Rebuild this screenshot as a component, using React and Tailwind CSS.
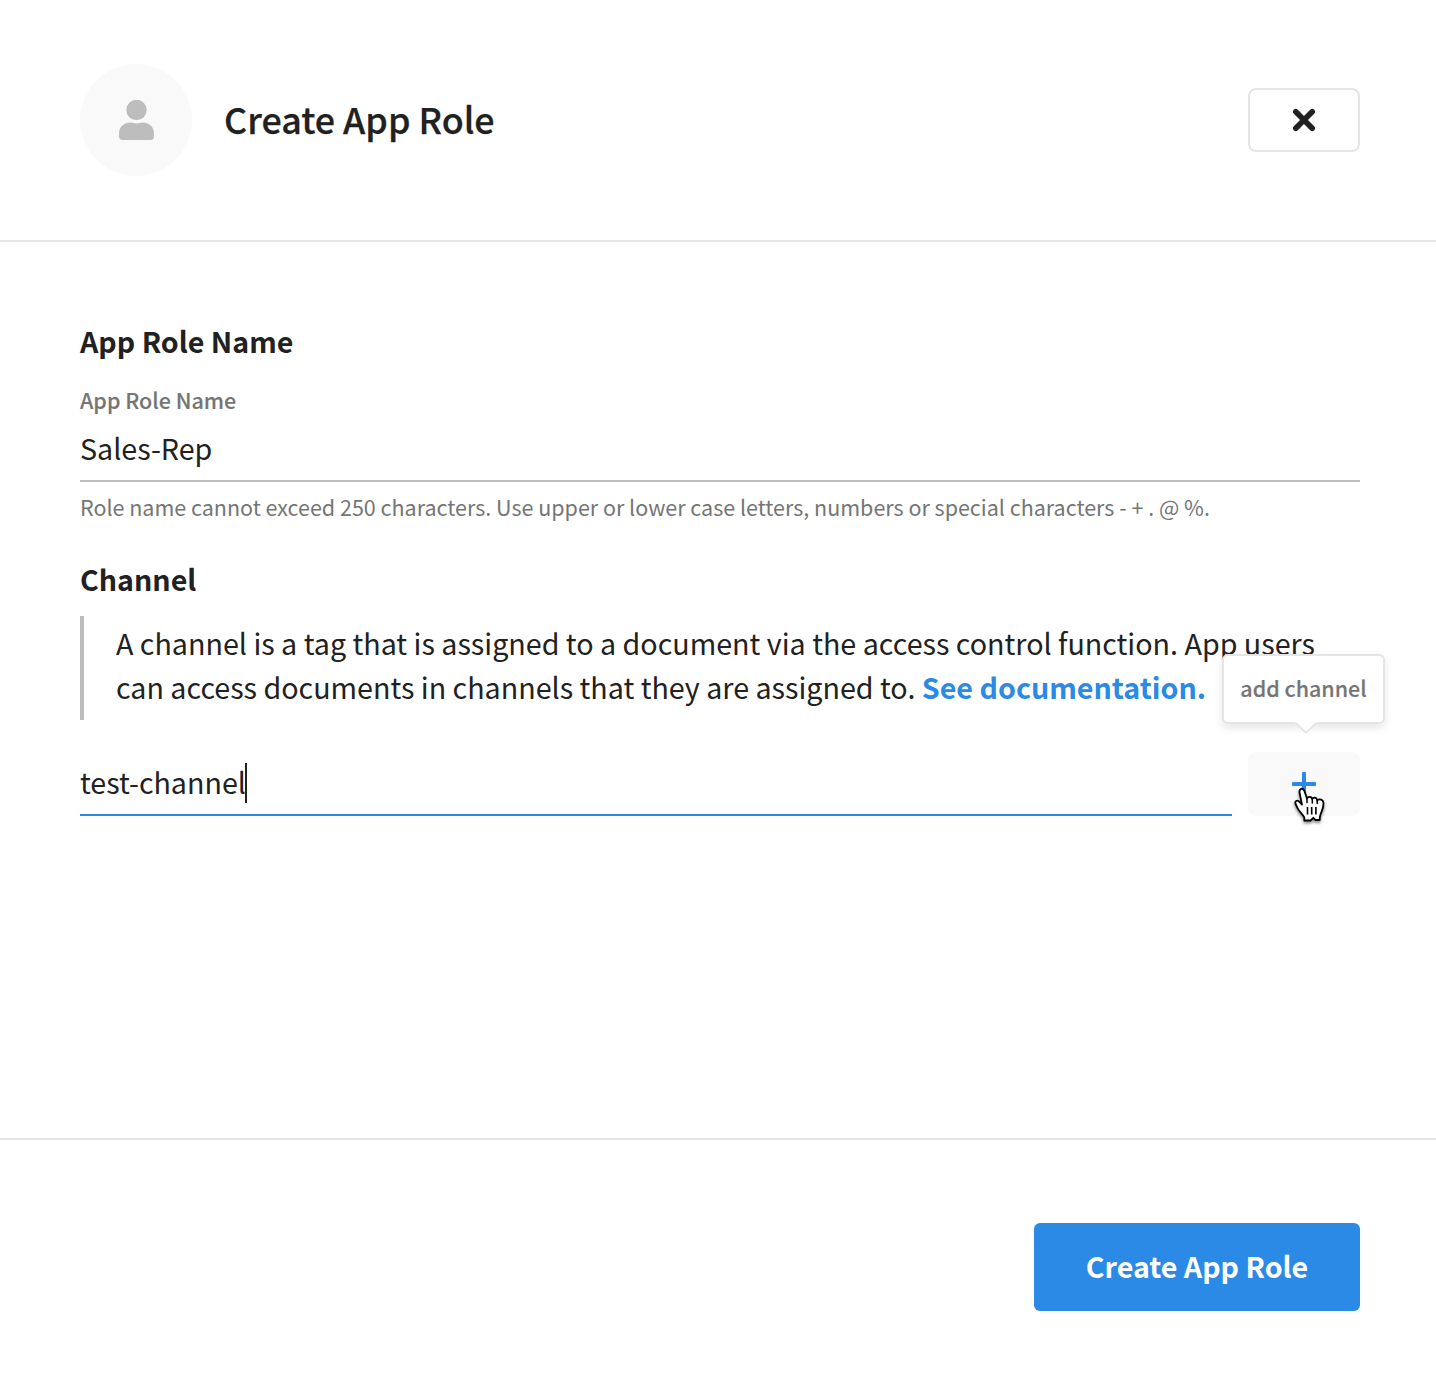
import React from 'react';

const Person = () => (
  <svg className="ml-px h-[40px] w-[35px]" viewBox="0 0 35 40" fill="#bdbdbd">
    <circle cx="17.500" cy="10" r="10.200" />
    <path d="M0 34C0 26.500 5 22.600 11.500 22.600C14 22.600 15 23.600 17.500 23.600C20 23.600 21 22.600 23.500 22.600C30 22.600 35 26.500 35 34V36.500C35 38.700 33.700 40 31.500 40H3.500C1.300 40 0 38.700 0 36.500Z" />
  </svg>
);

const Close = () => (
  <svg className="h-6 w-6" viewBox="0 0 24 24" stroke="#212121" fill="none">
    <path d="M3.200 3.200L20.800 20.800M20.800 3.200L3.200 20.800" strokeWidth="4.600" />
    <path d="M3.800 3.800L20.200 20.200M20.200 3.800L3.800 20.200" strokeLinecap="round" strokeWidth="5.600" />
  </svg>
);

const Plus = () => (
  <svg className="h-6 w-6" viewBox="0 0 24 24" stroke="#2a8ae6" strokeWidth="4" fill="none">
    <path d="M12 1.600V22.400M1.600 12H22.400" strokeLinecap="round" />
    <path d="M12 .6V23.400M.6 12H23.400" strokeWidth="3" />
  </svg>
);

const Hand = () => (
  <svg className="absolute top-[34px] left-[45px] h-[40px] w-[34px] drop-shadow-[0_2px_1.500px_rgba(0,0,0,0.45)]" viewBox="0 0 34 40" fill="none">
    <path
      d="M11.300 34.500V31.500C9.500 28.500 7.800 26.800 6 24.500C4.500 22.500 3.800 20.500 2.600 18C1.300 15 4.200 13.800 6.200 15.600L9 18.600L6.600 7C5.700 2.500 10 1.200 11.400 5L14 12.500C14.800 10.300 18.600 10 19.300 13C20.800 10.800 23.600 11.300 24.200 14.200C26.500 12.700 30 13.300 30.400 16.500C31 22 28.500 25.500 27.500 28.500C26.800 30.500 26.700 31.500 26.700 34L22.500 34L20.300 31.800L17.500 34.500Z"
      fill="#fff" stroke="#000" strokeWidth="1.800" strokeLinejoin="round"
    />
    <path d="M14 12.500V16.500M19.300 13V17M24.200 14.200V17.500" stroke="#000" strokeWidth="1.500" strokeLinecap="round" />
    <path d="M14.500 21V28.500M18.700 21V28.500M22.900 21V28.500" stroke="#000" strokeWidth="1.600" />
  </svg>
);

const Tooltip = () => (
  <div className="absolute bottom-[92px] left-[-26px] z-10 flex h-[70px] w-[163px] items-center justify-center rounded-md border-2 border-[#e5e5e5] bg-white pb-px text-[21.480px] font-medium whitespace-nowrap text-[#757575] shadow-[0_4px_8px_rgba(0,0,0,0.1)] [-webkit-text-stroke:0.15px]">
    add channel
    <svg className="absolute top-[66px] left-[71px] h-3 w-[22px]" viewBox="0 0 22 12">
      <path d="M0 0H22L11 11Z" fill="#fff" />
      <path d="M1 1L11 10.800L21 1" fill="none" stroke="#e5e5e5" strokeWidth="1.800" />
    </svg>
  </div>
);

export default function App() {
  return (
    <div className="flex h-[1384px] w-[1436px] flex-col bg-white font-['Noto_Sans_CJK_SC',sans-serif] text-[#212121]">
      <header className="flex h-[242px] items-center border-b-2 border-[#e5e5e5] pr-[76px] pl-20">
        <div className="flex size-28 items-center justify-center rounded-full bg-[#f9f9f9]">
          <Person />
        </div>
        <h1 className="ml-8 flex-1 pb-0.5 text-[35.850px] font-medium [-webkit-text-stroke:0.25px]">Create App Role</h1>
        <button className="flex h-16 w-28 items-center justify-center rounded-lg border-2 border-[#e5e5e5]">
          <Close />
        </button>
      </header>
      <main className="h-[896px] pt-[77px] pr-[76px] pl-20">
        <h2 className="h-[44px] text-[28.600px] leading-[44px] font-bold">App Role Name</h2>
        <div className="mt-5 text-[21.480px] leading-[34px] font-medium text-[#757575] [-webkit-text-stroke:0.15px]">App Role Name</div>
        <div className="h-[65px] border-b-2 border-[#bdbdbd] text-[28.640px] leading-[62px]">Sales-Rep</div>
        <p className="mt-[7px] text-[21.490px] leading-9 whitespace-nowrap text-[#757575]">Role name cannot exceed 250 characters. Use upper or lower case letters, numbers or special characters - + . @ %.</p>
        <h2 className="mt-8 h-[44px] text-[28.640px] leading-[44px] font-bold">Channel</h2>
        <p className="mt-[15px] border-l-4 border-[#bdbdbd] pt-[5px] pb-[11px] pl-8 text-[28.660px] leading-[44px] whitespace-nowrap">
          A channel is a tag that is assigned to a document via the access control function. App users<br />
          can access documents in channels that they are assigned to. <a className="font-bold text-[#2a8ae6]">See documentation.</a>
        </p>
        <div className="mt-8 flex gap-4">
          <div className="flex h-16 flex-1 border-b-2 border-[#2a8ae6] text-[28.640px] leading-[60px]">
            test-channel
            <span className="mt-[11px] -ml-[1px] h-10 w-0.5 bg-[#212121]" />
          </div>
          <div className="relative h-16 w-28">
            <Tooltip />
            <button className="flex size-full items-center justify-center rounded-lg bg-[#f9f9f9]"><Plus /></button>
            <Hand />
          </div>
        </div>
      </main>
      <footer className="flex h-[246px] justify-end border-t-2 border-[#e5e5e5] pt-[83px] pr-[76px]">
        <button className="h-[88px] w-[326px] rounded-md bg-[#2a8ae6] pb-0.5 text-[28.600px] font-bold text-white">Create App Role</button>
      </footer>
    </div>
  );
}
